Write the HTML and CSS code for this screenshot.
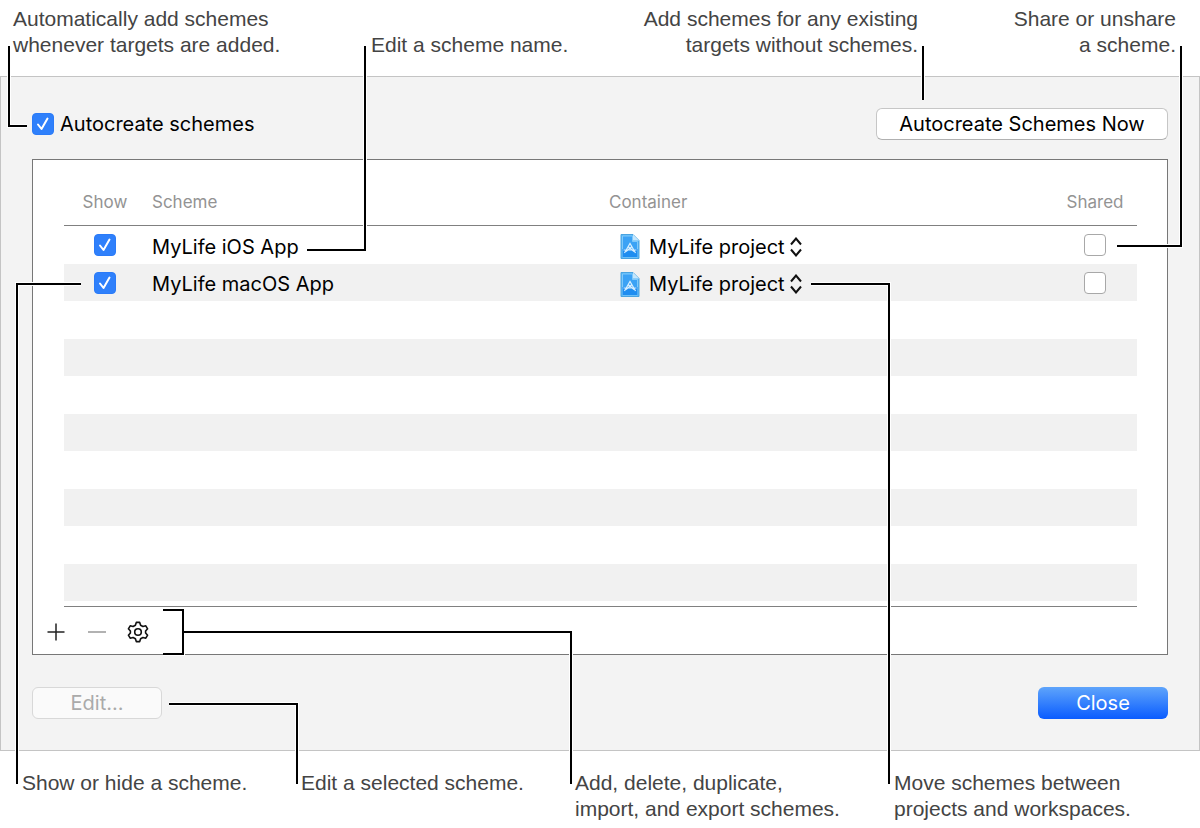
FILE: index.html
```
<!DOCTYPE html>
<html lang="en">
<head>
    <meta charset="UTF-8">
    <meta name="viewport" content="width=device-width, initial-scale=1.0">
    <title>Manage Schemes</title>
    <link rel="stylesheet" href="styles.css">
</head>
<body>
    <!-- Shared icons -->
    <svg class="sprite" aria-hidden="true">
        <symbol id="project-icon" viewBox="0 0 20 25">
            <path d="M1 .5h12l6 6v18H1z" fill="#54b6f8" stroke="#4aa3e0"/>
            <path d="M2.500 2h10v5.500h5V23h-15z" fill="#3ba2f5" stroke="#8fd0fa" stroke-width=".8"/>
            <path d="M2.500 15h15v8h-15z" fill="#1f8df0"/>
            <path d="M13 .5l6 6h-6z" fill="#c4e6fc"/>
            <path d="M4.500 19l5.500-9.500 5.500 9.500M3.500 16h13M8 12.500l6 5M12 12.500l-6 5" fill="none" stroke="#d8efff" stroke-width="1.200"/>
        </symbol>
        <symbol id="updown-icon" viewBox="0 0 12 20">
            <path d="M1 7.500L6 1.500l5 6M1 12.500l5 6 5-6" fill="none" stroke="#111" stroke-width="2"/>
        </symbol>
    </svg>

    <main class="figure">
        <header class="captions captions-top">
            <p class="caption caption-auto">Automatically add schemes<br>whenever targets are added.</p>
            <p class="caption caption-name">Edit a scheme name.</p>
            <p class="caption caption-existing">Add schemes for any existing<br>targets without schemes.</p>
            <p class="caption caption-share">Share or unshare<br>a scheme.</p>
        </header>

        <section class="sheet">
            <div class="bar">
                <label class="autocreate"><input type="checkbox" class="check" checked>Autocreate schemes</label>
                <button type="button" class="btn btn-wide">Autocreate Schemes Now</button>
            </div>

            <div class="box">
                <table class="schemes">
                    <thead>
                        <tr>
                            <th class="col-show">Show</th>
                            <th class="col-scheme">Scheme</th>
                            <th class="col-container">Container</th>
                            <th class="col-shared">Shared</th>
                        </tr>
                    </thead>
                    <tbody>
                        <tr>
                            <td class="col-show"><input type="checkbox" class="check" aria-label="Show MyLife iOS App" checked></td>
                            <td class="col-scheme">MyLife iOS App</td>
                            <td class="col-container">
                                <div class="popup">
                                    <svg class="popup-icon"><use href="#project-icon"/></svg>
                                    <select aria-label="Container of MyLife iOS App"><option>MyLife project</option></select>
                                    <svg class="popup-arrows"><use href="#updown-icon"/></svg>
                                </div>
                            </td>
                            <td class="col-shared"><input type="checkbox" class="check" aria-label="Share MyLife iOS App"></td>
                        </tr>
                        <tr>
                            <td class="col-show"><input type="checkbox" class="check" aria-label="Show MyLife macOS App" checked></td>
                            <td class="col-scheme">MyLife macOS App</td>
                            <td class="col-container">
                                <div class="popup">
                                    <svg class="popup-icon"><use href="#project-icon"/></svg>
                                    <select aria-label="Container of MyLife macOS App"><option>MyLife project</option></select>
                                    <svg class="popup-arrows"><use href="#updown-icon"/></svg>
                                </div>
                            </td>
                            <td class="col-shared"><input type="checkbox" class="check" aria-label="Share MyLife macOS App"></td>
                        </tr>
                        <tr><td colspan="4"></td></tr>
                        <tr><td colspan="4"></td></tr>
                        <tr><td colspan="4"></td></tr>
                        <tr><td colspan="4"></td></tr>
                        <tr><td colspan="4"></td></tr>
                        <tr><td colspan="4"></td></tr>
                        <tr><td colspan="4"></td></tr>
                        <tr><td colspan="4"></td></tr>
                    </tbody>
                </table>
                <div class="tools">
                    <button type="button" class="tool" aria-label="Add scheme">
                        <svg viewBox="0 0 24 24"><path d="M12 3.500v17M3.500 12h17" stroke="#222" stroke-width="1.500"/></svg>
                    </button>
                    <button type="button" class="tool" aria-label="Delete scheme" disabled>
                        <svg viewBox="0 0 24 24"><path d="M3 12h18" stroke="#999" stroke-width="1.500"/></svg>
                    </button>
                    <button type="button" class="tool" aria-label="More actions">
                        <svg viewBox="0 0 24 24" fill="none" stroke="#111" stroke-width="1.600" stroke-linejoin="round">
                            <path d="M10.300 2.400h3.400l.9 2.800 2.300 1.300 2.900-.7 1.800 3-2 2.200v2l2 2.200-1.800 3-2.900-.7-2.300 1.300-.9 2.800h-3.400l-.9-2.800-2.300-1.300-2.900.7-1.800-3 2-2.200v-2l-2-2.200 1.800-3 2.900.7 2.300-1.300z"/>
                            <circle cx="12" cy="12" r="3.300"/>
                        </svg>
                    </button>
                </div>
            </div>

            <div class="bar">
                <button type="button" class="btn" disabled>Edit...</button>
                <button type="button" class="btn btn-default">Close</button>
            </div>
        </section>

        <footer class="captions captions-bottom">
            <p class="caption caption-show">Show or hide a scheme.</p>
            <p class="caption caption-edit">Edit a selected scheme.</p>
            <p class="caption caption-tools">Add, delete, duplicate,<br>import, and export schemes.</p>
            <p class="caption caption-move">Move schemes between<br>projects and workspaces.</p>
        </footer>

        <!-- Leader lines: a white edge under each black stroke -->
        <svg class="leaders leaders-left" aria-hidden="true">
            <g class="edge">
                <path d="M9 46V126H27"/>
                <path d="M365 46V250H307"/>
                <path d="M81 284H17V784"/>
                <path d="M169 704H297V784"/>
                <path d="M163 610H183V654H163M183 632H571V784"/>
            </g>
            <g class="line">
                <path d="M9 46V126H27"/>
                <path d="M365 46V250H307"/>
                <path d="M81 284H17V784"/>
                <path d="M169 704H297V784"/>
                <path d="M163 610H183V654H163M183 632H571V784"/>
            </g>
        </svg>
        <svg class="leaders leaders-right" aria-hidden="true">
            <g class="edge">
                <path d="M323 46V100"/>
                <path d="M581 46V246H517"/>
                <path d="M211 284H289V784"/>
            </g>
            <g class="line">
                <path d="M323 46V100"/>
                <path d="M581 46V246H517"/>
                <path d="M211 284H289V784"/>
            </g>
        </svg>
    </main>
</body>
</html>
```
FILE: styles.css
```
* {
    box-sizing: border-box;
}

body {
    margin: 0;
    background: #fff;
    color: #000;
    font-family: Inter, Roboto, sans-serif;
    font-size: 20px;
    line-height: 26px;
}

.sprite {
    display: none;
}

.figure {
    position: relative;
    min-width: 1100px;
}

/* Captions */
.captions {
    display: flex;
}

.captions-top {
    align-items: flex-end;
    padding: 6px 24px 18px 13px;
}

.captions-bottom {
    padding: 19px 0 18px 22px;
}

.caption {
    margin: 0;
    color: #444;
    font-family: "Liberation Sans", Arial, sans-serif;
    font-size: 21px;
    white-space: nowrap;
}

.caption-auto {
    width: 358px;
}

.caption-name {
    flex: 1;
}

.caption-existing {
    text-align: right;
}

.caption-share {
    width: 258px;
    text-align: right;
}

.caption-show {
    width: 279px;
}

.caption-edit {
    width: 274px;
}

.caption-tools {
    flex: 1;
}

.caption-move {
    width: 306px;
}

/* Sheet */
.sheet {
    padding: 31px;
    background: #f3f3f3;
    border: 1px solid #c4c4c4;
}

.bar {
    display: flex;
    justify-content: space-between;
    align-items: center;
}

.autocreate {
    display: flex;
    align-items: center;
    gap: 6px;
}

.check {
    appearance: none;
    display: block;
    width: 22px;
    height: 22px;
    margin: 0;
    background: #fff;
    border: 1px solid #a8a8a8;
    border-radius: 4px;
}

.check:checked {
    border-color: #2b7bf8;
    background: #2f80fb url("data:image/svg+xml,%3Csvg xmlns='http://www.w3.org/2000/svg' viewBox='0 0 20 20'%3E%3Cpath d='M5 10.500l3.500 4.500 6-10.500' fill='none' stroke='white' stroke-width='2' stroke-linecap='round' stroke-linejoin='round'/%3E%3C/svg%3E") center / 20px 20px no-repeat;
}

.btn {
    width: 130px;
    height: 32px;
    padding: 0;
    background: #fff;
    border: 1px solid #c6c6c6;
    border-bottom-color: #b0b0b0;
    border-radius: 6px;
    color: #000;
    font: inherit;
}

.btn-wide {
    width: 292px;
}

.btn:disabled {
    background: #fafafa;
    border-color: #d8d8d8;
    color: #aaa;
}

.btn-default {
    border: none;
    background: linear-gradient(#5ea4fb, #0a5cff);
    color: #fff;
}

.box {
    margin: 19px 0 32px;
    padding-top: 16px;
    background: #fff;
    border: 1px solid #777;
}

/* Scheme list */
.schemes {
    width: calc(100% - 61px);
    margin: 0 30px 0 31px;
    table-layout: fixed;
    border-collapse: separate;
    border-spacing: 0;
    border-bottom: 1px solid #808080;
    padding-bottom: 5px;
}

.schemes th {
    height: 50px;
    padding: 2px 0 0;
    border-bottom: 1px solid #808080;
    color: #939393;
    font-size: 17px;
    font-weight: 400;
    text-align: left;
}

.schemes td {
    height: 38px;
    padding: 0;
}

.schemes tr:nth-child(even) td {
    height: 37px;
    background: #f1f1f1;
}

.schemes .col-show {
    width: 82px;
    text-align: center;
}

.schemes .col-scheme {
    padding-left: 6px;
}

.schemes .col-container {
    width: 444px;
}

.schemes td.col-container {
    padding-left: 11px;
}

.schemes td.col-scheme,
.schemes td.col-container {
    padding-top: 3px;
}

.schemes .col-shared {
    width: 84px;
    text-align: center;
}

.schemes .check {
    margin: 0 auto;
}

.popup {
    display: flex;
    align-items: center;
}

.popup-icon {
    width: 20px;
    height: 25px;
    margin-right: 9px;
}

.popup select {
    appearance: none;
    margin: 0;
    padding: 0;
    border: none;
    background: none;
    color: inherit;
    font: inherit;
}

.popup-arrows {
    width: 12px;
    height: 20px;
    margin-left: 5px;
}

.tools {
    display: flex;
    align-items: center;
    gap: 17px;
    height: 47px;
    padding: 3px 0 0 11px;
}

.tool {
    width: 24px;
    height: 24px;
    padding: 0;
    border: none;
    background: none;
}

.tool svg {
    display: block;
}

/* Leader lines */
.leaders {
    position: absolute;
    top: 0;
    width: 600px;
    height: 790px;
    fill: none;
    pointer-events: none;
}

.leaders-left {
    left: 0;
}

.leaders-right {
    right: 0;
}

.edge {
    stroke: #fff;
    stroke-width: 4px;
}

.line {
    stroke: #000;
    stroke-width: 2px;
}
```
